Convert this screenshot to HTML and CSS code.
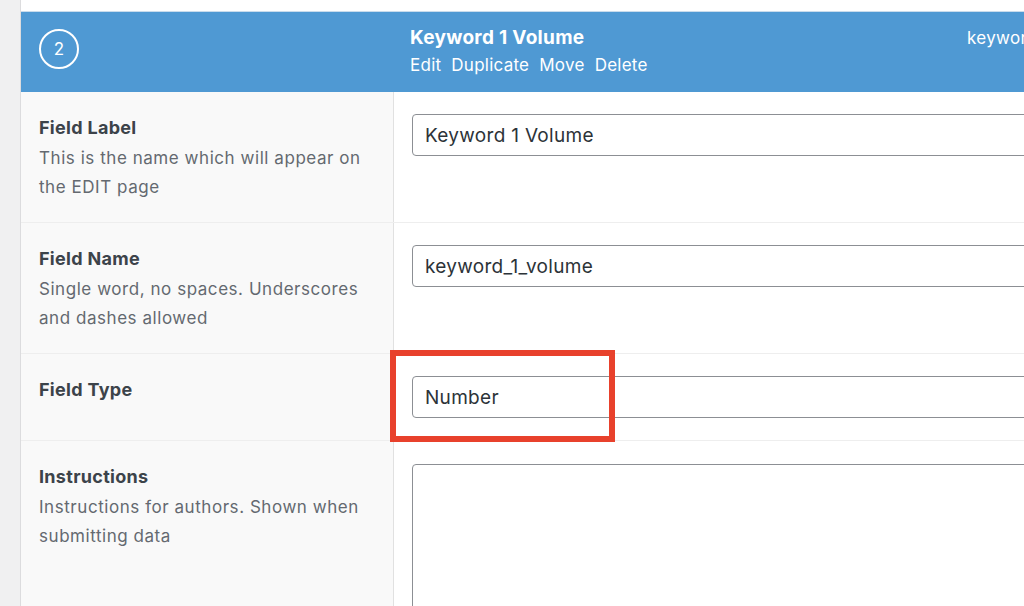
FILE: index.html
```html
<!DOCTYPE html>
<html lang="en">
<head>
  <meta charset="UTF-8">
  <meta name="viewport" content="width=device-width, initial-scale=1.0">
  <title>Field Settings</title>
  <link rel="stylesheet" href="styles.css">
</head>
<body>
  <div class="panel">
    <div class="panel-top"></div>
    <div class="field-head">
      <div class="head-order"><span class="order-badge">2</span></div>
      <div class="head-label">
        <strong>Keyword 1 Volume</strong>
        <div class="row-actions">
          <span>Edit</span>
          <span>Duplicate</span>
          <span>Move</span>
          <span>Delete</span>
        </div>
      </div>
      <div class="head-name">keyword_1_volume</div>
    </div>

    <div class="settings">
      <div class="setting">
        <div class="setting-label">
          <strong>Field Label</strong>
          <p>This is the name which will appear on the EDIT page</p>
        </div>
        <div class="setting-input">
          <input type="text" value="Keyword 1 Volume">
        </div>
      </div>

      <div class="setting">
        <div class="setting-label">
          <strong>Field Name</strong>
          <p>Single word, no spaces. Underscores and dashes allowed</p>
        </div>
        <div class="setting-input">
          <input type="text" value="keyword_1_volume">
        </div>
      </div>

      <div class="setting">
        <div class="setting-label">
          <strong>Field Type</strong>
        </div>
        <div class="setting-input">
          <input type="text" value="Number">
          <div class="highlight"></div>
        </div>
      </div>

      <div class="setting setting-last">
        <div class="setting-label">
          <strong>Instructions</strong>
          <p>Instructions for authors. Shown when submitting data</p>
        </div>
        <div class="setting-input">
          <textarea></textarea>
        </div>
      </div>
    </div>
  </div>
</body>
</html>
```

FILE: styles.css
```css
html, body {
  margin: 0;
  padding: 0;
  overflow: hidden;
}
body {
  font-family: Inter, "Noto Sans", Arial, sans-serif;
  background-color: #f0f0f1;
  color: #3c434a;
  height: 606px;
}
.panel {
  margin-left: 20px;
  width: 1200px;
  border-left: 1px solid #dcdcde;
  background: white;
  height: 606px;
}
.panel-top {
  height: 11px;
  border-bottom: 1px solid #c9dcec;
  background: white;
}
.field-head {
  display: grid;
  grid-template-columns: 373px 557px 1fr;
  height: 80px;
  background-color: #4f99d3;
  color: white;
}
.head-order {
  padding: 17px 0 0 18px;
}
.order-badge {
  display: flex;
  align-items: center;
  justify-content: center;
  width: 36px;
  height: 36px;
  border: 2px solid white;
  border-radius: 50%;
  font-size: 17px;
}
.head-label {
  padding: 14px 0 0 16px;
}
.head-label strong {
  display: block;
  font-size: 19px;
  line-height: 24px;
  letter-spacing: 0.3px;
}
.row-actions {
  display: flex;
  gap: 10px;
  font-size: 17px;
  line-height: 22px;
  letter-spacing: 0.25px;
  margin-top: 4px;
}
.head-name {
  padding: 15px 0 0 16px;
  font-size: 17px;
  line-height: 22px;
  letter-spacing: 0.3px;
}
.setting {
  display: grid;
  grid-template-columns: 373px 1fr;
  border-bottom: 1px solid #eeeeee;
}
.setting-last {
  border-bottom: 0;
  height: 200px;
}
.setting-label {
  background-color: #f9f9f9;
  border-right: 1px solid #e1e1e1;
  padding: 21px 18px 20px;
  font-size: 17px;
  line-height: 29px;
  letter-spacing: 0.55px;
}
.setting-label strong {
  display: block;
  font-size: 18px;
  letter-spacing: 0.3px;
  color: #3c434a;
}
.setting-label p {
  margin: 2px 0 0;
  color: #646970;
}
.setting-input {
  padding: 22px 18px 22px;
  position: relative;
}
input, textarea {
  display: block;
  box-sizing: border-box;
  width: 760px;
  height: 42px;
  border: 1px solid #8c8f94;
  border-radius: 4px;
  padding: 0 12px;
  font-family: Inter, "Noto Sans", Arial, sans-serif;
  font-size: 19px;
  letter-spacing: 0.3px;
  color: #2c3338;
  background: white;
}
textarea {
  height: 200px;
  margin-top: 1px;
  resize: none;
}
.highlight {
  position: absolute;
  left: -4px;
  top: -4px;
  width: 213px;
  height: 80px;
  border: 6px solid #e8412c;
}
```
